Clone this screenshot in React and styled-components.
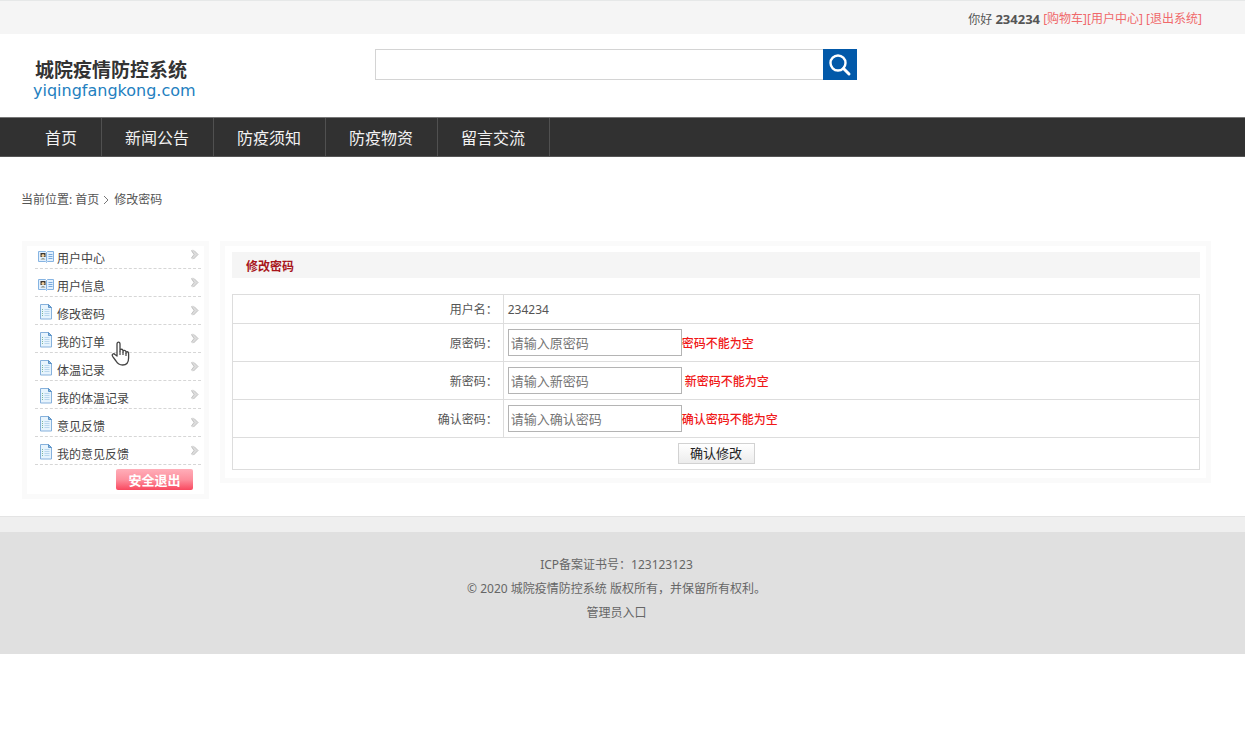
import React from "react";
import styled, { createGlobalStyle } from "styled-components";

const GlobalStyle = createGlobalStyle`
  * { box-sizing: border-box; }
  body {
    margin: 0;
    background: #fff;
    color: #555;
    font-family: "Noto Sans", "Noto Sans CJK SC", sans-serif;
    font-size: 12px;
    line-height: 24px;
  }
  a { color: inherit; text-decoration: none; }
  button, input { font-family: inherit; }
`;

const TopBar = styled.div`
  height: 34px;
  padding: 6px 43px 0 22px;
  background: #f5f5f5;
  border-top: 1px solid #e6e8e8;
  display: flex;
  justify-content: flex-end;
  white-space: pre;
  b { font-size: 13px; }
`;

const AccountLink = styled.a`
  color: #f0696b;
`;

const Header = styled.header`
  height: 83px;
  padding: 15px 34px 0 33px;
  display: flex;
  align-items: flex-start;
`;

const Logo = styled.a`
  width: 342px;
  flex: none;
  padding-top: 8px;
  display: flex;
  flex-direction: column;
`;

const LogoName = styled.span`
  padding-left: 2px;
  font-size: 19px;
  font-weight: 700;
  line-height: 26px;
  color: #333;
`;

const LogoDomain = styled.span`
  font-family: "DejaVu Sans", sans-serif;
  font-size: 16px;
  line-height: 16px;
  color: #2380c0;
`;

const SearchForm = styled.form`
  display: flex;
  width: 482px;
  height: 31px;
`;

const SearchInput = styled.input`
  flex: 1;
  min-width: 0;
  padding: 0 6px;
  font-size: 13px;
  border: 1px solid #d4d4d4;
  border-right: 0;
  background: #fff;
  outline: 0;
`;

const SearchButton = styled.button`
  width: 34px;
  padding: 0;
  border: 0;
  background: #0259a9;
  display: flex;
  align-items: center;
  justify-content: center;
`;

const Nav = styled.nav`
  height: 40px;
  padding-left: 22px;
  display: flex;
  background: #313131;
  border-top: 1px solid #777;
  border-bottom: 1px solid #555;
`;

const NavLink = styled.a`
  padding: 0 24px 0 23px;
  border-right: 1px solid #505050;
  color: #f2f2f2;
  font-size: 16px;
  line-height: 40px;
`;

const Breadcrumb = styled.div`
  padding: 31px 34px 29px 21px;
  display: flex;
  align-items: center;
  gap: 4px;
`;

const Columns = styled.main`
  padding: 0 34px 17px 22px;
  display: flex;
  align-items: flex-start;
  gap: 11px;
`;

const Panel = styled.section`
  border: 5px solid #fafafa;
  background: #fff;
`;

const Sidebar = styled(Panel)`
  width: 187px;
  flex: none;
  padding: 0 3px 4px 8px;
`;

const Menu = styled.ul`
  margin: 0;
  padding: 0;
  list-style: none;
`;

const MenuItem = styled.li`
  position: relative;
  height: 28px;
  border-bottom: 1px dashed #d6d6d6;
  &:first-child { height: 23px; }
`;

const MenuLink = styled.a`
  height: 100%;
  padding: 0 2px 0 3px;
  display: flex;
  align-items: flex-end;
  gap: 3px;
  color: #444;
  line-height: 18px;
  svg { flex: none; margin-bottom: 4px; }
  span { flex: 1; }
  svg:last-child { margin-bottom: 8px; }
`;

const Pointer = styled.svg`
  position: absolute;
  left: 76px;
  top: 16px;
  z-index: 1;
`;

const LogoutButton = styled.button`
  display: block;
  width: 77px;
  height: 21px;
  margin: 4px 8px 0 auto;
  padding: 0;
  border: 0;
  border-radius: 2px;
  background: linear-gradient(#ffaeb9, #fd8f9d 50%, #f9485f);
  color: #fff;
  font-size: 13px;
  font-weight: 700;
  line-height: 20px;
`;

const Content = styled(Panel)`
  flex: 1;
  min-width: 0;
  padding: 6px 6px 8px 7px;
`;

const ContentTitle = styled.h1`
  margin: 0 0 16px;
  padding: 3px 14px 0;
  background: #f5f5f5;
  color: #a8161c;
  font-size: 12px;
  font-weight: 700;
  line-height: 23px;
`;

const FormTable = styled.table`
  width: 100%;
  border-collapse: collapse;
  table-layout: fixed;
  line-height: 18px;
  th, td { border: 1px solid #ddd; padding: 6px 4px 4px; }
  th { width: 28%; padding-right: 5px; font-weight: 400; text-align: right; }
`;

const FieldCell = styled.td`
  && { padding: 5px 4px; }
`;

const Field = styled.div`
  display: flex;
  align-items: center;
`;

const PasswordInput = styled.input`
  width: 174px;
  height: 27px;
  padding: 0 2px;
  border: 1px solid #b4b4b4;
  outline: 0;
  font-size: 13px;
  color: #333;
  &::placeholder { color: #757575; opacity: 1; }
`;

const FieldError = styled.span`
  padding-left: ${(p) => (p.$spaced ? 3 : 0)}px;
  color: #f01818;
  font-weight: 500;
  line-height: 16px;
  padding-top: 2px;
`;

const SubmitButton = styled.button`
  display: block;
  width: 77px;
  height: 21px;
  margin: 0 auto;
  padding: 0;
  border: 1px solid #d2d2d2;
  background: linear-gradient(#fff, #ececec);
  color: #222;
  font-size: 13px;
  line-height: 19px;
`;

const Footer = styled.footer`
  height: 138px;
  padding: 36px 34px 0 22px;
  border-top: 1px solid #e4e4e4;
  box-shadow: inset 0 15px 0 #efefef;
  background: #e0e0e0;
  color: #666;
  text-align: center;
  p { margin: 0; }
`;

const CardIcon = () => (
  <svg width="16" height="14" viewBox="0 0 16 14" aria-hidden="true">
    <path d="M.5 1.500h7l1 1 1-1h6v10h-6l-1 1-1-1h-7z" fill="#e2f0fd" stroke="#86b4e2" />
    <path d="M8.500 2.500v9" stroke="#86b4e2" />
    <path d="M10.500 4.500h4M10.500 6.500h4M10.500 8.500h4" stroke="#79a9dc" />
    <path d="M2.500 3h5v4h-5z" fill="#3d362f" />
    <circle cx="5" cy="5.500" r="1.500" fill="#f3cf9a" />
    <path d="M2.500 9.500Q5 6.500 7.500 9.500z" fill="#8c8f80" />
  </svg>
);

const PageIcon = () => (
  <svg width="16" height="17" viewBox="0 0 16 17" aria-hidden="true">
    <path d="M2.500 1.500h8l3 3v11.500h-11z" fill="#e7f4fd" stroke="#86b1dc" />
    <path d="M10.500 1.500v3h3z" fill="#91bde4" stroke="#5c93c7" />
    <path d="M6.500 6.500h5M6.500 8.500h5M6.500 10.500h5M6.500 12.500h5" stroke="#b9d6ee" />
    <path d="M4 6.500h1M4 8.500h1M4 10.500h1M4 12.500h1" stroke="#7fb89a" />
  </svg>
);

const ArrowIcon = () => (
  <svg width="9" height="11" viewBox="0 0 9 11" aria-hidden="true">
    <path d="M1 1.500l2-1 5 5-5 5-2-1 3-4z" fill="#dcdcdc" />
    <path d="M1.500 1.500l2.500 4L1.500 9M4 1.500L8 5.500 3.500 10" fill="none" stroke="#c2c2c2" />
  </svg>
);

const HandIcon = () => (
  <Pointer width="19" height="25" viewBox="0 0 19 25" aria-hidden="true">
    <path
      d="M6 15V3.200C6 .5 9 .5 9 3.200V10c0-2.400 3-2.300 3 0v1c0-2.400 3-2.200 3 .2v1c0-2.200 2.600-1.900 2.600.6V17c0 4.500-2 7-6 7-3.400 0-5-1.300-6.600-4L1.600 15.300C.4 13 2.800 12 4 13.500z"
      fill="#fff"
      stroke="#444"
      strokeWidth="1.300"
      strokeLinejoin="round"
    />
    <path d="M9 10v4M12 11v3M15 12v3" stroke="#444" strokeWidth="1.200" />
  </Pointer>
);

const navItems = ["首页", "新闻公告", "防疫须知", "防疫物资", "留言交流"];

const menuItems = [
  { label: "用户中心", icon: CardIcon },
  { label: "用户信息", icon: CardIcon },
  { label: "修改密码", icon: PageIcon },
  { label: "我的订单", icon: PageIcon, hovered: true },
  { label: "体温记录", icon: PageIcon },
  { label: "我的体温记录", icon: PageIcon },
  { label: "意见反馈", icon: PageIcon },
  { label: "我的意见反馈", icon: PageIcon },
];

const fields = [
  { id: "old", label: "原密码", error: "密码不能为空" },
  { id: "new", label: "新密码", error: "新密码不能为空", spaced: true },
  { id: "confirm", label: "确认密码", error: "确认密码不能为空" },
];

export default function App() {
  return (
    <>
      <GlobalStyle />
      <TopBar>
        <span>你好 <b>234234</b> </span>
        <AccountLink href="#">[购物车]</AccountLink>
        <AccountLink href="#">[用户中心]</AccountLink>
        <span> </span>
        <AccountLink href="#">[退出系统]</AccountLink>
      </TopBar>
      <Header>
        <Logo href="#">
          <LogoName>城院疫情防控系统</LogoName>
          <LogoDomain>yiqingfangkong.com</LogoDomain>
        </Logo>
        <SearchForm>
          <SearchInput type="text" aria-label="搜索" />
          <SearchButton type="button" aria-label="搜索">
            <svg width="24" height="24" viewBox="0 0 24 24" fill="none" stroke="#fff">
              <circle cx="10" cy="10" r="7.500" strokeWidth="2.400" />
              <path d="M15.500 15.500l5.500 5.500" strokeWidth="3" strokeLinecap="round" />
            </svg>
          </SearchButton>
        </SearchForm>
      </Header>
      <Nav>
        {navItems.map((item) => (
          <NavLink key={item} href="#">{item}</NavLink>
        ))}
      </Nav>
      <Breadcrumb>
        <span>当前位置: <a href="#">首页</a></span>
        <svg width="7" height="10" viewBox="0 0 7 10" fill="none" stroke="#777" aria-hidden="true">
          <path d="M1 1l4 4-4 4" />
        </svg>
        <span>修改密码</span>
      </Breadcrumb>
      <Columns>
        <Sidebar as="aside">
          <Menu>
            {menuItems.map(({ label, icon: Icon, hovered }) => (
              <MenuItem key={label}>
                <MenuLink href="#">
                  <Icon />
                  <span>{label}</span>
                  <ArrowIcon />
                </MenuLink>
                {hovered && <HandIcon />}
              </MenuItem>
            ))}
          </Menu>
          <LogoutButton type="button">安全退出</LogoutButton>
        </Sidebar>
        <Content>
          <ContentTitle>修改密码</ContentTitle>
          <FormTable>
            <tbody>
              <tr>
                <th scope="row">用户名：</th>
                <td>234234</td>
              </tr>
              {fields.map((f) => (
                <tr key={f.id}>
                  <th scope="row"><label htmlFor={f.id}>{f.label}：</label></th>
                  <FieldCell>
                    <Field>
                      <PasswordInput id={f.id} type="password" placeholder={`请输入${f.label}`} />
                      <FieldError $spaced={f.spaced}>{f.error}</FieldError>
                    </Field>
                  </FieldCell>
                </tr>
              ))}
              <tr>
                <FieldCell colSpan={2}>
                  <SubmitButton type="button">确认修改</SubmitButton>
                </FieldCell>
              </tr>
            </tbody>
          </FormTable>
        </Content>
      </Columns>
      <Footer>
        <p>ICP备案证书号：123123123</p>
        <p>© 2020 城院疫情防控系统 版权所有，并保留所有权利。</p>
        <p><a href="#">管理员入口</a></p>
      </Footer>
    </>
  );
}
